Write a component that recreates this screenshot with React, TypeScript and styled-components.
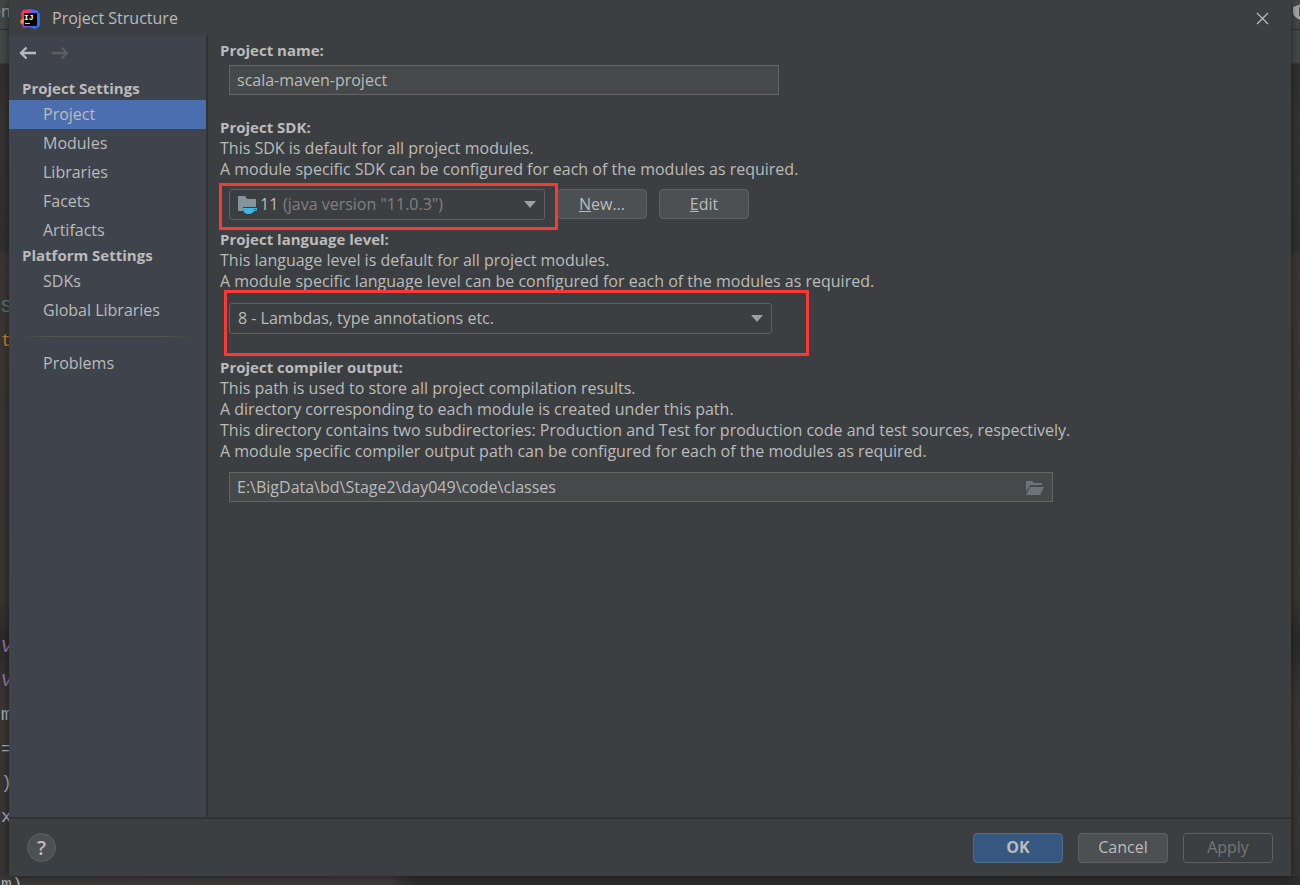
import React from "react";
import styled, { createGlobalStyle, css } from "styled-components";

const color = {
  panel: "#3c3f41",
  sidebar: "#3f434c",
  line: "#323232",
  text: "#bbbbbb",
  muted: "#808080",
  field: "#45494a",
  fieldBorder: "#646464",
  comboBorder: "#5e6163",
  button: "#4c5052",
  selected: "#4b6eaf",
  primary: "#365880",
  primaryBorder: "#4c708c",
  mark: "#fb3838",
};

const GlobalStyle = createGlobalStyle`
  *, *::before, *::after { box-sizing: border-box; }
  body {
    margin: 0;
    background: #2f2f2e;
    color: ${color.text};
    font: 16px/21px "Open Sans", "Noto Sans", sans-serif;
  }
  button, input, select { font: inherit; color: inherit; margin: 0; }
`;

const Page = styled.div`
  position: relative;
  display: flex;
  min-height: 100vh;
  padding: 0 9px 9px;
  overflow: hidden;
`;

const Editor = styled.div`
  position: absolute;
  inset: 0;
  overflow: hidden;
  background:
    linear-gradient(to right, #3a3735 0, #3d3938 30%, #2b2c2b 32%, #2b2c2b 88%, #5a5c5a 88%, #2b2c2b 88%)
      bottom / 100% 9px no-repeat,
    linear-gradient(
      to bottom,
      #424745 0,
      #424745 29px,
      #2d2f2c 29px,
      #2d2f2c 30px,
      #414846 30px,
      #414846 63px,
      #302f2d 64px,
      #353331 120px,
      #2f302e 250px,
      #3b3634 256px,
      #38342f 600px,
      #2b2a29 640px,
      #3a3533 700px,
      #363432 100%
    );
`;

const EditorTabs = styled.div`
  display: flex;
  justify-content: space-between;
  height: 290px;
  margin: 0 -9px 0 -8px;
  line-height: 23px;
  color: #9a9d9e;
`;

const CodeLine = styled.pre<{ $color?: string; $italic?: boolean }>`
  margin: 0;
  padding-left: 1px;
  height: 34px;
  font: 18px/34px "Liberation Mono", monospace;
  font-style: ${(p) => (p.$italic ? "italic" : "normal")};
  color: ${(p) => p.$color ?? "#a3b0bd"};
`;

const Dialog = styled.main`
  position: relative;
  flex: 1;
  display: flex;
  flex-direction: column;
  min-width: 0;
  background: ${color.panel};
  box-shadow: 0 0 8px rgba(0, 0, 0, 0.5);
`;

const TitleBar = styled.header`
  display: flex;
  align-items: center;
  gap: 11px;
  height: 35px;
  padding: 2px 22px 0 11px;
`;

const Title = styled.h1`
  flex: 1;
  margin: 0;
  font-size: 16px;
  font-weight: 400;
`;

const IconButton = styled.button`
  display: flex;
  align-items: center;
  justify-content: center;
  padding: 0;
  border: 0;
  background: none;
`;

const Body = styled.div`
  flex: 1;
  display: flex;
`;

const Sidebar = styled.nav`
  flex: none;
  width: 199px;
  border-right: 2px solid ${color.line};
  background: ${color.sidebar};
`;

const History = styled.div`
  display: flex;
  gap: 15px;
  height: 43px;
  padding: 9px 10px 0;
  align-items: flex-start;
`;

const GroupTitle = styled.h2`
  margin: 0;
  padding: 0 0 2px 13px;
  font-size: 15px;
  line-height: 20px;
  font-weight: 700;
`;

const NavList = styled.ul`
  margin: 0;
  padding: 0;
  list-style: none;
`;

const NavLink = styled.a<{ $active?: boolean }>`
  display: block;
  padding-left: 34px;
  line-height: 29px;
  color: inherit;
  text-decoration: none;
  background: ${(p) => (p.$active ? color.selected : "transparent")};
`;

const Divider = styled.hr`
  height: 1px;
  margin: 11px 12px 12px;
  border: 0;
  background: linear-gradient(to right, transparent, #55564f 20%, #55564f 80%, transparent);
`;

const Content = styled.section`
  flex: 1;
  min-width: 0;
  padding: 5px 12px;
`;

const Section = styled.div<{ $gap: number }>`
  margin-bottom: ${(p) => p.$gap}px;
`;

const FieldLabel = styled.label`
  display: block;
  font-size: 15px;
  font-weight: 700;
`;

const Description = styled.p`
  margin: 0;
`;

const FieldRow = styled.div<{ $top: number }>`
  display: flex;
  align-items: flex-start;
  gap: 12px;
  margin-top: ${(p) => p.$top}px;
  padding-left: 9px;
`;

const TextBox = styled.div<{ $width: number }>`
  display: flex;
  align-items: center;
  width: ${(p) => p.$width}px;
  max-width: 100%;
  height: 30px;
  padding-right: 7px;
  border: 1px solid ${color.fieldBorder};
  background: ${color.field};
`;

const TextInput = styled.input`
  flex: 1;
  min-width: 0;
  height: 28px;
  padding: 0 7px;
  border: 0;
  outline: 0;
  background: none;
`;

const Combo = styled.div<{ $width: number }>`
  position: relative;
  display: grid;
  align-items: center;
  width: ${(p) => p.$width}px;
  height: 31px;

  & > * {
    grid-area: 1 / 1;
  }
`;

const Select = styled.select<{ $indent: number; $muted?: boolean }>`
  appearance: none;
  width: 100%;
  height: 31px;
  padding: 0 30px 0 ${(p) => p.$indent}px;
  border: 1px solid ${color.comboBorder};
  border-radius: 3px;
  outline: 0;
  background: none;
  color: ${(p) => (p.$muted ? color.muted : color.text)};
`;

const ComboPrefix = styled.span`
  display: flex;
  align-items: center;
  gap: 2px;
  padding-left: 9px;
  pointer-events: none;
`;

const ComboArrow = styled.svg`
  justify-self: end;
  margin-right: 9px;
  pointer-events: none;
`;

const Highlight = styled.span<{ $inset: string }>`
  position: absolute;
  inset: ${(p) => p.$inset};
  z-index: 1;
  border: 3px solid ${color.mark};
  pointer-events: none;
`;

const Button = styled.button<{ $primary?: boolean }>`
  width: 90px;
  height: 30px;
  padding: 0;
  border: 1px solid ${color.comboBorder};
  border-radius: 4px;
  background: ${color.button};

  ${(p) =>
    p.$primary &&
    css`
      border-color: ${color.primaryBorder};
      background: ${color.primary};
      font-weight: 700;
    `}

  &:disabled {
    background: none;
    color: #777777;
  }
`;

const Mnemonic = styled.span`
  text-decoration: underline;
`;

const Footer = styled.footer`
  display: flex;
  align-items: center;
  gap: 15px;
  height: 59px;
  padding: 0 18px;
  border-top: 2px solid ${color.line};
`;

const HelpButton = styled.button`
  width: 29px;
  height: 29px;
  margin-right: auto;
  padding: 0;
  border: 1px solid #5e6163;
  border-radius: 50%;
  background: ${color.button};
  font-size: 20px;
  font-weight: 600;
  line-height: 27px;
`;

const Logo = () => (
  <svg width="21" height="20" viewBox="0 0 21 20" aria-hidden="true">
    <path d="M1 4 3 1l6-1 2 4-3 6-6 1z" fill="#fc2f63" />
    <path d="M0 12l3-3 3 4-2 4-3-2z" fill="#f8832a" />
    <path d="M13 2l4-1 3 4v12l-5 3-6-2z" fill="#3070f0" />
    <path d="M10 0l5 1 2 4-7 1z" fill="#6a5be8" />
    <path d="M2 15l4-2 5 5-8 1z" fill="#8a3fd0" />
    <rect x="4" y="4" width="13" height="13" fill="#000" />
    <text x="4" y="11" fill="#fff" fontFamily="Liberation Mono, monospace" fontWeight="700" fontSize="8">
      IJ
    </text>
    <rect x="5" y="14" width="5" height="1" fill="#ccc" />
  </svg>
);

const BackArrow = ({ stroke }: { stroke: string }) => (
  <svg width="18" height="18" viewBox="0 0 18 18" fill="none" stroke={stroke} strokeWidth="2.3" aria-hidden="true">
    <path d="M17 9H2M7.5 3.5 2 9l5.5 5.5" />
  </svg>
);

const ForwardArrow = ({ stroke }: { stroke: string }) => (
  <svg width="18" height="18" viewBox="0 0 18 18" fill="none" stroke={stroke} strokeWidth="2.3" aria-hidden="true">
    <path d="M0 9h15M9.500 3.500 15 9l-5.500 5.500" />
  </svg>
);

const CloseIcon = () => (
  <svg width="13" height="13" viewBox="0 0 13 13" fill="none" stroke="#bbbbbb" strokeWidth="1.2" aria-hidden="true">
    <path d="M1 1l11 11M12 1 1 12" />
  </svg>
);

const ShieldIcon = () => (
  <svg width="16" height="24" viewBox="0 0 16 24" aria-hidden="true">
    <path d="M0 7l8-3 8 3v5c0 4-4 7-8 8-4-1-8-4-8-8z" fill="#a2a5a6" />
    <path d="M6 7h4v9H6z" fill="#4a4e4f" />
  </svg>
);

const JdkIcon = () => (
  <svg width="20" height="19" viewBox="0 0 20 19" aria-hidden="true">
    <path d="M0 1h7l2 3h9v8H5v4H0z" fill="#87939a" />
    <path d="M5 13h14v1c0 2-1 2-3 2-1 2-3 3-5 3-4 0-6-2-6-6z" fill="#40b6e0" />
    <path d="M16 14h2c0 1-1 1-2 1z" fill={color.panel} />
  </svg>
);

const FolderIcon = () => (
  <svg width="20" height="16" viewBox="0 0 20 16" fill="#6a757b" aria-hidden="true">
    <path d="M1 2h6l2 2h8v2H5l-4 7z" />
    <path d="M5 8h14l-4 8H1z" />
  </svg>
);

const Arrow = () => (
  <ComboArrow width="12" height="7" viewBox="0 0 12 7" aria-hidden="true">
    <path d="M0 0h12L6 7z" fill="#9da0a2" />
  </ComboArrow>
);

const code: { text: string; color?: string; italic?: boolean }[] = [
  { text: "S", color: "#4a8078" },
  { text: "t", color: "#cc7832" },
  ...Array.from({ length: 8 }, () => ({ text: " " })),
  { text: "V", color: "#9876aa", italic: true },
  { text: "V", color: "#9876aa", italic: true },
  { text: "m" },
  { text: "=" },
  { text: ")" },
  { text: "x" },
  { text: " " },
  { text: "m)" },
];

const projectItems = ["Project", "Modules", "Libraries", "Facets", "Artifacts"];
const platformItems = ["SDKs", "Global Libraries"];

const NavGroup = ({ items, active }: { items: string[]; active?: string }) => (
  <NavList>
    {items.map((item) => (
      <li key={item}>
        <NavLink href="#" $active={item === active} aria-current={item === active ? "page" : undefined}>
          {item}
        </NavLink>
      </li>
    ))}
  </NavList>
);

export default function App() {
  return (
    <>
      <GlobalStyle />
      <Page>
        <Editor aria-hidden="true">
          <EditorTabs>
            en
            <ShieldIcon />
          </EditorTabs>
          {code.map((line, i) => (
            <CodeLine key={i} $color={line.color} $italic={line.italic}>
              {line.text}
            </CodeLine>
          ))}
        </Editor>

        <Dialog>
          <TitleBar>
            <Logo />
            <Title>Project Structure</Title>
            <IconButton aria-label="Close">
              <CloseIcon />
            </IconButton>
          </TitleBar>

          <Body>
            <Sidebar>
              <History>
                <IconButton aria-label="Back">
                  <BackArrow stroke="#bbbbbb" />
                </IconButton>
                <IconButton aria-label="Forward" disabled>
                  <ForwardArrow stroke="#5c5d5f" />
                </IconButton>
              </History>
              <GroupTitle>Project Settings</GroupTitle>
              <NavGroup items={projectItems} active="Project" />
              <GroupTitle>Platform Settings</GroupTitle>
              <NavGroup items={platformItems} />
              <Divider />
              <NavGroup items={["Problems"]} />
            </Sidebar>

            <Content>
              <Section $gap={22}>
                <FieldLabel htmlFor="name">Project name:</FieldLabel>
                <FieldRow $top={4}>
                  <TextBox $width={550}>
                    <TextInput id="name" defaultValue="scala-maven-project" />
                  </TextBox>
                </FieldRow>
              </Section>

              <Section $gap={9}>
                <FieldLabel htmlFor="sdk">Project SDK:</FieldLabel>
                <Description>This SDK is default for all project modules.</Description>
                <Description>
                  A module specific SDK can be configured for each of the modules as required.
                </Description>
                <FieldRow $top={9}>
                  <Combo $width={316}>
                    <Select id="sdk" $indent={53} $muted>
                      <option>(java version "11.0.3")</option>
                    </Select>
                    <ComboPrefix>
                      <JdkIcon />
                      11
                    </ComboPrefix>
                    <Arrow />
                    <Highlight $inset="-6px -13px -10px -10px" />
                  </Combo>
                  <Button>
                    <Mnemonic>N</Mnemonic>ew...
                  </Button>
                  <Button>
                    <Mnemonic>E</Mnemonic>dit
                  </Button>
                </FieldRow>
              </Section>

              <Section $gap={23}>
                <FieldLabel htmlFor="level">Project language level:</FieldLabel>
                <Description>This language level is default for all project modules.</Description>
                <Description>
                  A module specific language level can be configured for each of the modules as required.
                </Description>
                <FieldRow $top={11}>
                  <Combo $width={543}>
                    <Select id="level" $indent={8}>
                      <option>8 - Lambdas, type annotations etc.</option>
                    </Select>
                    <Arrow />
                    <Highlight $inset="-13px -37px -22px -5px" />
                  </Combo>
                </FieldRow>
              </Section>

              <Section $gap={9}>
                <FieldLabel htmlFor="output">Project compiler output:</FieldLabel>
                <Description>This path is used to store all project compilation results.</Description>
                <Description>A directory corresponding to each module is created under this path.</Description>
                <Description>
                  This directory contains two subdirectories: Production and Test for production code and test
                  sources, respectively.
                </Description>
                <Description>
                  A module specific compiler output path can be configured for each of the modules as required.
                </Description>
                <FieldRow $top={10}>
                  <TextBox $width={824}>
                    <TextInput id="output" defaultValue="E:\BigData\bd\Stage2\day049\code\classes" />
                    <IconButton aria-label="Browse">
                      <FolderIcon />
                    </IconButton>
                  </TextBox>
                </FieldRow>
              </Section>
            </Content>
          </Body>

          <Footer>
            <HelpButton aria-label="Help">?</HelpButton>
            <Button $primary>OK</Button>
            <Button>Cancel</Button>
            <Button disabled>Apply</Button>
          </Footer>
        </Dialog>
      </Page>
    </>
  );
}
